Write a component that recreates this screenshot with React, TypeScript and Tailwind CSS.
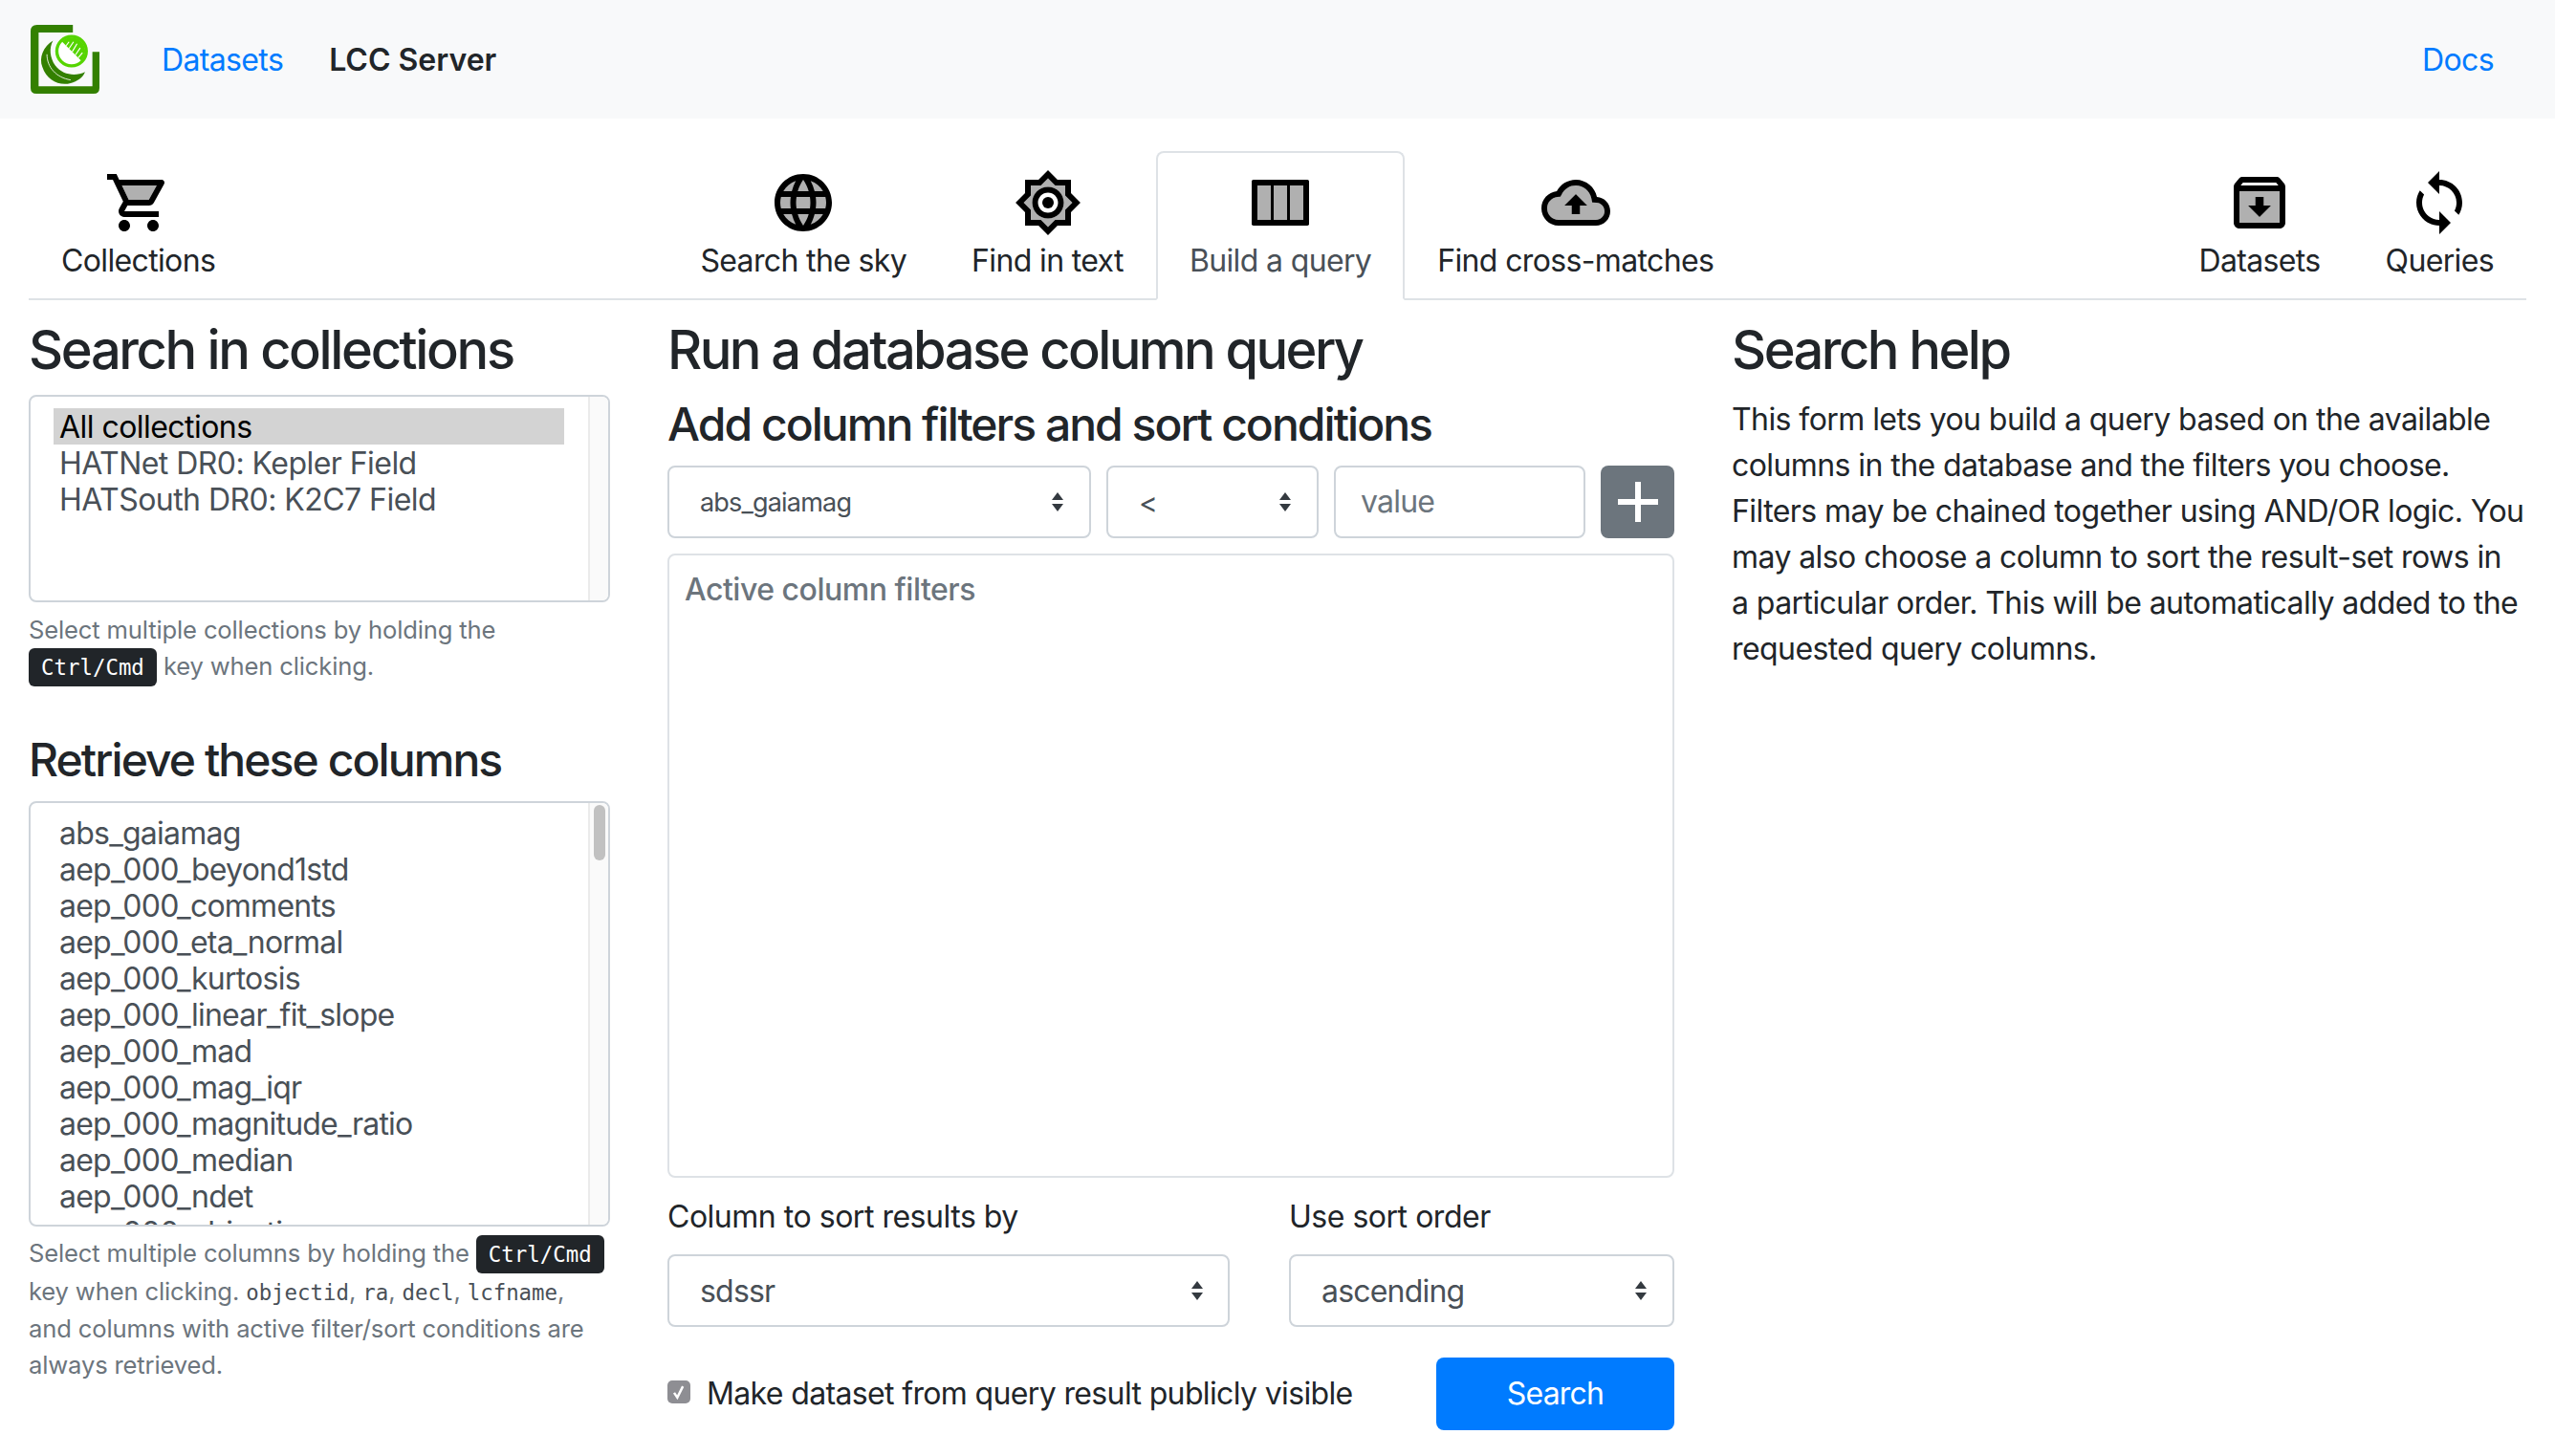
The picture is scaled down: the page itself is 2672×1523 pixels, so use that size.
import React from "react";

const COLUMNS = [
  "abs_gaiamag",
  "aep_000_beyond1std",
  "aep_000_comments",
  "aep_000_eta_normal",
  "aep_000_kurtosis",
  "aep_000_linear_fit_slope",
  "aep_000_mad",
  "aep_000_mag_iqr",
  "aep_000_magnitude_ratio",
  "aep_000_median",
  "aep_000_ndet",
  "aep_000_objective",
];

const GRAY = "#b0b0b0";

function Icon({ children }: { children: React.ReactNode }) {
  return (
    <svg viewBox="0 0 24 24" className="w-[72px] h-[72px]" fill="black">
      {children}
    </svg>
  );
}

function Cart() {
  return (
    <Icon>
      <path fill={GRAY} d="M15.55 11l2.76-5H6.16l2.37 5z" />
      <path d="M15.55 13c.75 0 1.41-.41 1.75-1.03l3.58-6.49c.37-.66-.11-1.48-.87-1.48H5.21l-.94-2H1v2h2l3.6 7.59-1.35 2.44C4.52 15.37 5.48 17 7 17h12v-2H7l1.1-2h7.45zM6.16 6h12.15l-2.76 5H8.53L6.16 6zM7 18c-1.1 0-1.99.9-1.99 2S5.9 22 7 22s2-.9 2-2-.9-2-2-2zm10 0c-1.1 0-1.99.9-1.99 2s.89 2 1.99 2 2-.9 2-2-.9-2-2-2z" />
    </Icon>
  );
}

function Globe() {
  return (
    <Icon>
      <circle cx="12" cy="12" r="9" fill={GRAY} />
      <path d="M11.99 2C6.47 2 2 6.48 2 12s4.47 10 9.99 10C17.52 22 22 17.52 22 12S17.52 2 11.99 2zm6.93 6h-2.95c-.32-1.25-.78-2.45-1.38-3.56 1.84.63 3.37 1.91 4.33 3.56zM12 4.04c.83 1.2 1.48 2.53 1.91 3.96h-3.82c.43-1.43 1.08-2.76 1.91-3.96zM4.26 14C4.1 13.36 4 12.69 4 12s.1-1.36.26-2h3.38c-.08.66-.14 1.32-.14 2 0 .68.06 1.34.14 2H4.26zm.82 2h2.95c.32 1.25.78 2.45 1.38 3.56-1.84-.63-3.37-1.9-4.33-3.56zm2.95-8H5.08c.96-1.66 2.49-2.93 4.33-3.56C8.81 5.55 8.35 6.75 8.03 8zM12 19.96c-.83-1.2-1.48-2.53-1.91-3.96h3.82c-.43 1.43-1.08 2.76-1.91 3.96zM14.34 14H9.66c-.09-.66-.16-1.32-.16-2 0-.68.07-1.35.16-2h4.68c.09.65.16 1.32.16 2 0 .68-.07 1.34-.16 2zm.25 5.56c.6-1.11 1.06-2.31 1.38-3.56h2.95c-.96 1.65-2.49 2.93-4.33 3.56zM16.36 14c.08-.66.14-1.32.14-2 0-.68-.06-1.34-.14-2h3.38c.16.64.26 1.31.26 2s-.1 1.36-.26 2h-3.38z" />
    </Icon>
  );
}

function Sun() {
  return (
    <Icon>
      <path fill={GRAY} d="M18 9.52V6h-3.52L12 3.52 9.52 6H6v3.52L3.52 12 6 14.48V18h3.52L12 20.48 14.48 18H18v-3.52L20.48 12 18 9.52zm-6 7.98c-3.03 0-5.5-2.47-5.5-5.5S8.97 6.5 12 6.5s5.5 2.47 5.5 5.5-2.47 5.5-5.5 5.5z" />
      <path d="M20 8.69V4h-4.69L12 .69 8.69 4H4v4.69L.69 12 4 15.31V20h4.69L12 23.31 15.31 20H20v-4.69L23.31 12 20 8.69zm-2 5.79V18h-3.52L12 20.48 9.52 18H6v-3.52L3.52 12 6 9.52V6h3.52L12 3.52 14.48 6H18v3.52L20.48 12 18 14.48zM12 6.5c-3.03 0-5.5 2.47-5.5 5.5s2.47 5.5 5.5 5.5 5.5-2.47 5.5-5.5-2.47-5.5-5.5-5.5zm0 9c-1.93 0-3.5-1.57-3.5-3.5s1.57-3.5 3.5-3.5 3.5 1.57 3.5 3.5-1.57 3.5-3.5 3.5z" />
      <circle cx="12" cy="12" r="2" />
    </Icon>
  );
}

function ColumnsIcon() {
  return (
    <Icon>
      <rect x="2" y="4" width="20" height="16" rx="0.6" />
      <rect x="4" y="6" width="4.67" height="12" fill={GRAY} />
      <rect x="9.67" y="6" width="4.67" height="12" fill={GRAY} />
      <rect x="15.33" y="6" width="4.67" height="12" fill={GRAY} />
    </Icon>
  );
}

function Cloud() {
  return (
    <Icon>
      <path fill={GRAY} d="M19.21 12.04l-1.53-.11-.3-1.5C16.88 7.86 14.62 6 12 6 9.94 6 8.06 7.14 7.11 8.97L6.61 9.92l-1.07.11C3.5 10.24 2 11.95 2 14c0 2.21 1.79 4 4 4h13c1.65 0 3-1.35 3-3 0-1.55-1.22-2.86-2.79-2.96zm-5.76.96v3h-2.9v-3H8l4-4 4 4h-2.55z" />
      <path d="M19.35 10.04C18.67 6.59 15.64 4 12 4 9.11 4 6.6 5.64 5.35 8.04 2.34 8.36 0 10.91 0 14c0 3.31 2.69 6 6 6h13c2.76 0 5-2.24 5-5 0-2.64-2.05-4.78-4.65-4.96zM19 18H6c-2.21 0-4-1.79-4-4 0-2.05 1.53-3.76 3.56-3.97l1.07-.11.5-.95C8.08 7.14 9.94 6 12 6c2.62 0 4.88 1.86 5.39 4.43l.3 1.5 1.53.11c1.56.1 2.78 1.41 2.78 2.96 0 1.65-1.35 3-3 3zM8 13h2.55v3h2.9v-3H16l-4-4z" />
    </Icon>
  );
}

function ArchiveIcon() {
  return (
    <Icon>
      <path fill={GRAY} d="M5 19h14V8H5v11zm5.55-6v-3h2.9v3H16l-4 4-4-4h2.55z" />
      <path d="M20.54 5.23l-1.39-1.68C18.88 3.21 18.47 3 18 3H6c-.47 0-.88.21-1.16.55L3.46 5.23C3.17 5.57 3 6.02 3 6.5V19c0 1.1.9 2 2 2h14c1.1 0 2-.9 2-2V6.5c0-.48-.17-.93-.46-1.27zM6.24 5h11.52l.83 1H5.42l.82-1zM5 19V8h14v11H5zm8.45-9h-2.9v3H8l4 4 4-4h-2.55z" />
    </Icon>
  );
}

function Sync() {
  return (
    <Icon>
      <path d="M12 4V1L8 5l4 4V6c3.31 0 6 2.69 6 6 0 1.01-.25 1.97-.7 2.8l1.46 1.46C19.54 15.03 20 13.57 20 12c0-4.42-3.58-8-8-8zm0 14c-3.31 0-6-2.69-6-6 0-1.01.25-1.97.7-2.8L5.24 7.74C4.46 8.97 4 10.43 4 12c0 4.42 3.58 8 8 8v3l4-4-4-4v3z" />
    </Icon>
  );
}

function Logo() {
  // drawn in the coordinates of a 3x crop of the logo
  return (
    <svg viewBox="35 33 215 215" className="w-[72px] h-[72px] shrink-0">
      <path d="M167 33H55Q35 33 35 53V230Q35 248 53 248H232Q250 248 250 230V117H228V225H60V57H167Z" fill="#338000" />
      <path d="M105 82C75 100 60 135 72 165C85 205 125 225 160 215C180 210 198 198 205 180C175 195 135 190 112 160C95 135 92 105 105 82Z" fill="#338000" />
      <path d="M86 125C86 165 115 198 160 205" fill="none" stroke="white" strokeWidth="2.5" />
      <circle cx="163" cy="115" r="46" fill="white" stroke="#55d400" strokeWidth="10" />
      <path d="M133 85A42 42 0 0 1 193 145Z" fill="#55d400" />
      <path d="M146 98L155 86M155 107L169 86M165 117L180 92M175 127L190 105M184 136L197 120" stroke="white" strokeWidth="3.5" />
    </svg>
  );
}

function Tab({ icon, label, active }: { icon: React.ReactNode; label: string; active?: boolean }) {
  return (
    <div
      className={
        active
          ? "flex flex-col items-center px-[33px] pt-[16px] pb-[16px] border-2 border-[#dee2e6] border-b-white rounded-t-lg -mb-[2px] text-[#495057]"
          : "flex flex-col items-center px-[34px] pt-[18px] pb-[16px] text-[#212529]"
      }
    >
      {icon}
      <span className="h-[48px] leading-[50px] whitespace-nowrap tracking-[-0.02em]">{label}</span>
    </div>
  );
}

function SelectArrows() {
  return (
    <svg viewBox="0 0 16 20" className="w-[16px] h-[20px] shrink-0" fill="#343a40">
      <path d="M8 0l6 8H2zM8 20l-6-8h12z" />
    </svg>
  );
}

function Select({ value, className, textClass }: { value: string; className: string; textClass: string }) {
  return (
    <div className={"h-[76px] flex items-center justify-between border-2 border-[#ced4da] rounded-lg bg-white text-[#495057] " + className}>
      <span className={textClass}>{value}</span>
      <SelectArrows />
    </div>
  );
}

function Kbd() {
  return (
    <kbd className="inline-block h-[40px] leading-[40px] px-[13px] rounded-[6px] bg-[#212529] text-white text-[22.4px] tracking-normal font-['DejaVu_Sans_Mono',monospace] align-baseline">
      Ctrl/Cmd
    </kbd>
  );
}

function Code({ children }: { children: React.ReactNode }) {
  return <code className="text-[22.4px] tracking-normal font-['DejaVu_Sans_Mono',monospace] text-[#495057]">{children}</code>;
}

function ListBox({ className, children, thumb }: { className: string; children: React.ReactNode; thumb?: boolean }) {
  return (
    <div className={"flex border-2 border-[#ced4da] rounded-lg overflow-hidden bg-white " + className}>
      <div className="flex-1 min-w-0 overflow-hidden pl-[24px] pr-[25px] text-[#495057]">{children}</div>
      <div className="w-[21px] shrink-0 bg-[#fafafa] border-l-2 border-[#ebebeb] pt-[2px] pl-[4px]">
        {thumb && <div className="w-[12px] h-[58px] rounded-full bg-[#c1c1c1]" />}
      </div>
    </div>
  );
}

export default function App() {
  return (
    <div className="min-h-[1523px] bg-white text-[#212529] text-[32px] font-['Inter','Liberation_Sans',sans-serif]">
      <nav className="h-[124px] bg-[#f8f9fa] flex items-center pl-[32px] pr-[64px] tracking-[-0.02em]">
        <Logo />
        <a className="ml-[65px] pt-[2px] text-[#007bff]">Datasets</a>
        <span className="ml-[48px] pt-[2px] font-semibold tracking-normal">LCC Server</span>
        <a className="ml-auto pt-[2px] text-[#007bff]">Docs</a>
      </nav>

      <div className="px-[30px]">
        <div className="pt-[34px] flex justify-between border-b-2 border-[#dee2e6]">
          <div className="flex">
            <Tab icon={<Cart />} label="Collections" />
          </div>
          <div className="flex">
            <Tab icon={<Globe />} label="Search the sky" />
            <Tab icon={<Sun />} label="Find in text" />
            <Tab icon={<ColumnsIcon />} label="Build a query" active />
            <Tab icon={<Cloud />} label="Find cross-matches" />
          </div>
          <div className="flex">
            <Tab icon={<ArchiveIcon />} label="Datasets" />
            <Tab icon={<Sync />} label="Queries" />
          </div>
        </div>

        <div className="flex pt-[19px]">
          <div className="w-[608px] shrink-0">
            <h3 className="text-[56px] font-medium leading-[67px] tracking-[-0.042em] whitespace-nowrap">Search in collections</h3>
            <ListBox className="mt-[13px] h-[217px]">
              <div className="pt-[12px] tracking-[-0.017em]">
                <div className="h-[38px] leading-[40px] bg-[#d3d3d3] text-black px-[6px]">All collections</div>
                <div className="h-[38px] leading-[40px] px-[6px]">HATNet DR0: Kepler Field</div>
                <div className="h-[38px] leading-[40px] px-[6px]">HATSouth DR0: K2C7 Field</div>
              </div>
            </ListBox>
            <p className="mt-[10px] text-[25.6px] leading-[38.4px] text-[#6c757d] tracking-[-0.006em]">
              Select multiple collections by holding the <Kbd /> key when clicking.
            </p>
            <h4 className="mt-[48px] text-[48px] font-medium leading-[58px] tracking-[-0.04em] whitespace-nowrap">Retrieve these columns</h4>
            <ListBox className="mt-[14px] h-[445px]" thumb>
              <div className="pt-[13px] tracking-[-0.024em]">
                {COLUMNS.map((c) => (
                  <div key={c} className="h-[38px] leading-[38px] px-[6px]">
                    {c}
                  </div>
                ))}
              </div>
            </ListBox>
            <p className="mt-[9px] text-[25.6px] leading-[38px] text-[#6c757d] tracking-[-0.006em]">
              Select multiple columns by holding the <Kbd /> key when clicking. <Code>objectid</Code>, <Code>ra</Code>, <Code>decl</Code>, <Code>lcfname</Code>, and columns with active filter/sort conditions are always retrieved.
            </p>
          </div>

          <div className="w-[1053px] ml-[60px] shrink-0">
            <h3 className="text-[56px] font-medium leading-[67px] tracking-[-0.046em]">Run a database column query</h3>
            <h4 className="mt-[15px] text-[48px] font-medium leading-[58px] tracking-[-0.041em]">Add column filters and sort conditions</h4>
            <div className="mt-[14px] flex gap-[16px]">
              <Select value="abs_gaiamag" className="w-[443px] pl-[32px] pr-[25px]" textClass="text-[27px] pt-[2px] tracking-[-0.03em]" />
              <Select value="<" className="w-[222px] pl-[32px] pr-[25px]" textClass="text-[30px] pt-[2px]" />
              <div className="w-[263px] h-[76px] flex items-center border-2 border-[#ced4da] rounded-lg pl-[26px] text-[#6c757d] tracking-[-0.025em]">value</div>
              <button className="w-[77px] h-[76px] rounded-lg bg-[#6c757d] flex items-center justify-center">
                <svg viewBox="0 0 42 42" className="w-[42px] h-[42px]" fill="white">
                  <path d="M18 0h6v18h18v6H24v18h-6V24H0v-6h18z" />
                </svg>
              </button>
            </div>
            <div className="mt-[16px] h-[653px] border-2 border-[#dee2e6] rounded-lg px-[16px] pt-[12px]">
              <div className="text-[#6c757d] font-medium leading-[48px] tracking-[-0.015em]">Active column filters</div>
            </div>
            <div className="mt-[17px] flex gap-[62px]">
              <div className="w-[588px]">
                <label className="block leading-[48px] tracking-[-0.015em]">Column to sort results by</label>
                <Select value="sdssr" className="mt-[15px] pl-[32px] pr-[24px]" textClass="pt-[2px] tracking-[-0.025em]" />
              </div>
              <div className="w-[403px]">
                <label className="block leading-[48px] tracking-[-0.015em]">Use sort order</label>
                <Select value="ascending" className="mt-[15px] pl-[32px] pr-[25px]" textClass="pt-[2px] tracking-[-0.025em]" />
              </div>
            </div>
            <div className="mt-[32px] flex items-center justify-between">
              <label className="flex items-center gap-[17px] tracking-[-0.02em]">
                <span className="w-[24px] h-[24px] -mt-[4px] rounded-[5px] bg-[#8e8e93] flex items-center justify-center">
                  <svg viewBox="0 0 24 24" className="w-[20px] h-[20px]" fill="none" stroke="white" strokeWidth="3">
                    <path d="M6 13l4 6 7-14" />
                  </svg>
                </span>
                Make dataset from query result publicly visible
              </label>
              <button className="w-[249px] h-[76px] rounded-lg bg-[#007bff] text-white tracking-[-0.025em]">Search</button>
            </div>
          </div>

          <div className="w-[831px] ml-[60px] shrink-0">
            <h3 className="text-[56px] font-medium leading-[67px] tracking-[-0.045em]">Search help</h3>
            <p className="mt-[15px] leading-[48px] tracking-[-0.018em] whitespace-nowrap">
              This form lets you build a query based on the available
              <br />
              columns in the database and the filters you choose.
              <br />
              Filters may be chained together using AND/OR logic. You
              <br />
              may also choose a column to sort the result-set rows in
              <br />
              a particular order. This will be automatically added to the
              <br />
              requested query columns.
            </p>
          </div>
        </div>
      </div>
    </div>
  );
}
